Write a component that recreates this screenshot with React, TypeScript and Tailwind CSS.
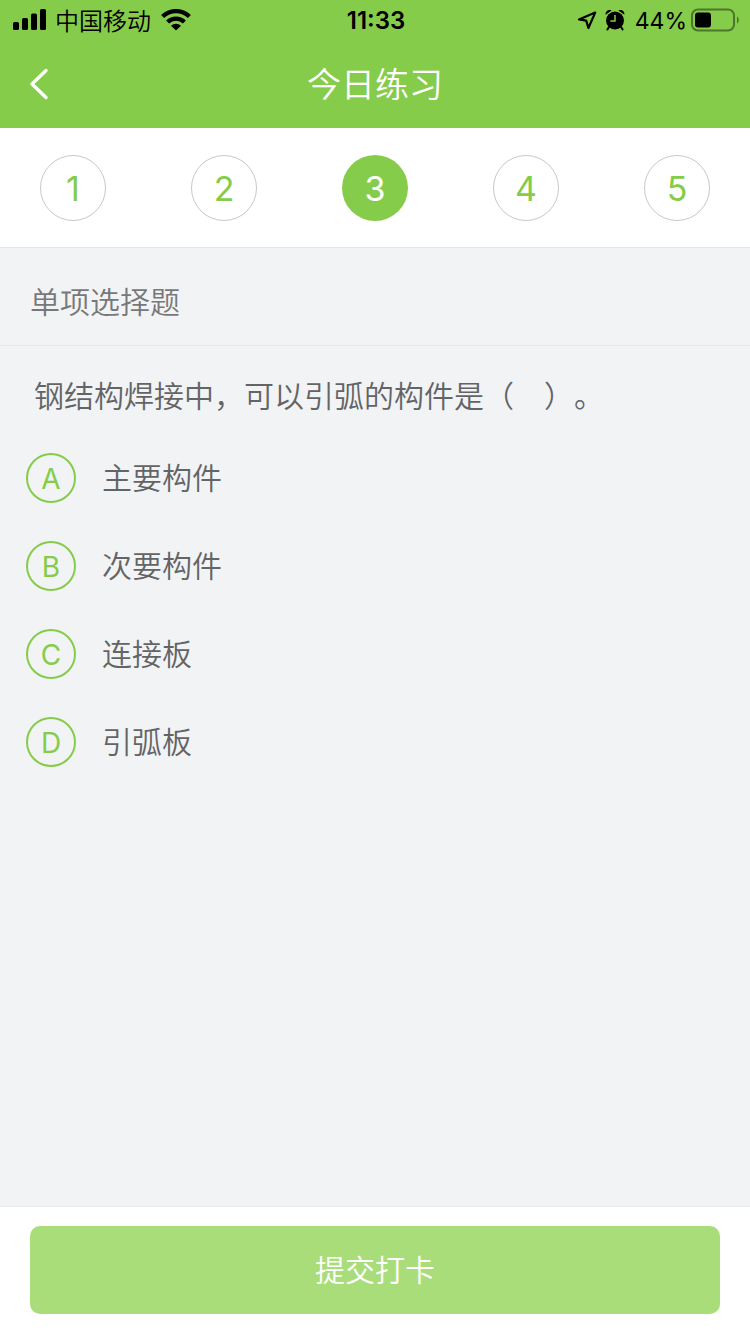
import { useState } from "react"

const STEPS = [1, 2, 3, 4, 5]

const OPTIONS = [
  { key: "A", label: "主要构件" },
  { key: "B", label: "次要构件" },
  { key: "C", label: "连接板" },
  { key: "D", label: "引弧板" },
]

function SignalIcon() {
  return (
    <svg width="34" height="22" viewBox="0 0 34 22" fill="currentColor" aria-hidden="true">
      <rect x="0" y="13" width="6" height="8" rx="1.6" />
      <rect x="9" y="9" width="6" height="12" rx="1.6" />
      <rect x="18" y="4.5" width="6" height="16.5" rx="1.6" />
      <rect x="27" y="0" width="6" height="21" rx="1.6" />
    </svg>
  )
}

function WifiIcon() {
  return (
    <svg width="30" height="22" viewBox="0 0 30 22" aria-hidden="true">
      <g fill="none" stroke="currentColor" strokeWidth="4.2">
        <path d="M1.6 7.6 A19 19 0 0 1 28.4 7.6" />
        <path d="M6.6 13 A12 12 0 0 1 23.4 13" />
      </g>
      <path fill="currentColor" d="M10 16.8 A7.2 7.2 0 0 1 20 16.8 L15 21.6 Z" />
    </svg>
  )
}

function LocationIcon() {
  return (
    <svg width="20" height="20" viewBox="0 0 20 20" aria-hidden="true">
      <path
        d="M18.2 2.6 L2 9.4 L9.2 10.6 L11.4 18 Z"
        fill="none"
        stroke="currentColor"
        strokeWidth="2.2"
        strokeLinejoin="round"
      />
    </svg>
  )
}

function AlarmIcon() {
  return (
    <svg width="20" height="22" viewBox="0 0 20 22" aria-hidden="true">
      <circle cx="10" cy="11.5" r="9" fill="currentColor" />
      <path d="M0.6 5.8 C0.2 2.4 3.2 0.2 6.6 1.4 Z M19.4 5.8 C19.8 2.4 16.8 0.2 13.4 1.4 Z" fill="currentColor" />
      <path
        d="M4 18 L2.4 20.4 M16 18 L17.6 20.4"
        fill="none"
        stroke="currentColor"
        strokeWidth="2"
        strokeLinecap="round"
      />
      <path d="M10 6 V12 H5.4" fill="none" stroke="#86cc4b" strokeWidth="1.5" />
    </svg>
  )
}

function BatteryIcon() {
  return (
    <svg width="48" height="24" viewBox="0 0 48 24" aria-hidden="true">
      <g opacity="0.42">
        <rect x="1" y="1.5" width="42" height="21" rx="6" fill="none" stroke="currentColor" strokeWidth="2" />
        <path d="M46 8.5 C48.4 9.6 48.4 14.4 46 15.5 Z" fill="currentColor" />
      </g>
      <rect x="4" y="4.5" width="16" height="15" rx="3" fill="currentColor" />
    </svg>
  )
}

function StatusBar() {
  return (
    <div className="grid h-10 grid-cols-[1fr_auto_1fr] items-center pl-[13px] pr-[11px] text-2xl text-black">
      <div className="flex items-center">
        <SignalIcon />
        <span className="ml-2 pt-1 font-[350]">中国移动</span>
        <span className="ml-[10px]">
          <WifiIcon />
        </span>
      </div>
      <span className="pt-0.5 font-semibold">11:33</span>
      <div className="flex items-center justify-end">
        <LocationIcon />
        <span className="ml-2">
          <AlarmIcon />
        </span>
        <span className="ml-[10px] mr-1 pt-0.5 text-[23px]">44%</span>
        <BatteryIcon />
      </div>
    </div>
  )
}

export default function App() {
  const [step, setStep] = useState(3)
  const [answer, setAnswer] = useState("")

  return (
    <div className="flex min-h-screen flex-col bg-[#f2f3f5] font-['Inter','Noto_Sans_CJK_SC',sans-serif]">
      <header className="bg-[#86cc4b]">
        <StatusBar />
        <div className="grid h-[88px] grid-cols-[80px_1fr_80px] items-center text-white">
          <button type="button" aria-label="返回" className="flex h-full items-center pl-7">
            <svg width="22" height="32" viewBox="0 0 22 32" fill="none" aria-hidden="true">
              <path
                d="M18 2.5 L4 16 L18 29.5"
                stroke="currentColor"
                strokeWidth="3.4"
                strokeLinecap="round"
                strokeLinejoin="round"
              />
            </svg>
          </button>
          <h1 className="text-center text-[34px] font-[350]">今日练习</h1>
        </div>
      </header>

      <nav className="flex h-[120px] items-center justify-between border-b border-[#e4e4e6] bg-white px-10">
        {STEPS.map((n) => (
          <button
            key={n}
            type="button"
            aria-current={n === step ? "step" : undefined}
            onClick={() => setStep(n)}
            className={
              n === step
                ? "size-[66px] rounded-full bg-[#86cc4b] pt-0.5 text-[34px] text-white"
                : "size-[66px] rounded-full border border-[#c8c8cc] bg-white pt-0.5 text-[34px] text-[#86cc4b]"
            }
          >
            {n}
          </button>
        ))}
      </nav>

      <main className="flex-1 text-[30px]">
        <h2 className="flex h-[98px] items-center border-b border-[#e6e8ea] px-[30px] pt-3 font-[350] text-[#77787a]">
          单项选择题
        </h2>
        <fieldset className="text-[#636466]">
          <legend className="px-[34px] pt-7 pb-[35px] font-[350] leading-[44px] [text-spacing-trim:space-all]">
            钢结构焊接中，可以引弧的构件是（　）。
          </legend>
          <div className="flex flex-col px-[26px]">
            {OPTIONS.map((o) => (
              <label key={o.key} className="flex h-[88px] cursor-pointer items-start gap-[26px]">
                <input
                  type="radio"
                  name="answer"
                  value={o.key}
                  checked={answer === o.key}
                  onChange={() => setAnswer(o.key)}
                  className="peer sr-only"
                />
                <span className="flex size-[50px] items-center justify-center rounded-full border-2 border-[#86cc4b] pt-0.5 text-[28px] text-[#86cc4b] peer-checked:bg-[#86cc4b] peer-checked:text-white">
                  {o.key}
                </span>
                <span className="font-[350] leading-[50px]">{o.label}</span>
              </label>
            ))}
          </div>
        </fieldset>
      </main>

      <footer className="border-t border-[#e6e8ea] bg-white px-[30px] pt-[19px] pb-5">
        <button
          type="button"
          className="h-[88px] w-full rounded-[10px] bg-[#a9dd7a] text-[30px] font-[350] text-white"
        >
          提交打卡
        </button>
      </footer>
    </div>
  )
}
